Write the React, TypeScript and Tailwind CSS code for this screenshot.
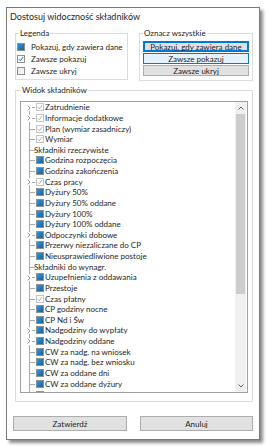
import React from "react";

type Kind = "gray" | "blue" | "none";
type Row = { t: string; k: Kind; exp?: boolean };

const rows: Row[] = [
  { t: "Zatrudnienie", k: "gray", exp: true },
  { t: "Informacje dodatkowe", k: "gray", exp: true },
  { t: "Plan (wymiar zasadniczy)", k: "gray" },
  { t: "Wymiar", k: "gray" },
  { t: "Składniki rzeczywiste", k: "none" },
  { t: "Godzina rozpoczęcia", k: "blue" },
  { t: "Godzina zakończenia", k: "blue" },
  { t: "Czas pracy", k: "gray", exp: true },
  { t: "Dyżury 50%", k: "blue" },
  { t: "Dyżury 50% oddane", k: "blue" },
  { t: "Dyżury 100%", k: "blue" },
  { t: "Dyżury 100% oddane", k: "blue" },
  { t: "Odpoczynki dobowe", k: "blue", exp: true },
  { t: "Przerwy niezaliczane do CP", k: "blue" },
  { t: "Nieusprawiedliwione postoje", k: "blue" },
  { t: "Składniki do wynagr.", k: "none" },
  { t: "Uzupełnienia z oddawania", k: "blue", exp: true },
  { t: "Przestoje", k: "blue" },
  { t: "Czas płatny", k: "gray" },
  { t: "CP godziny nocne", k: "blue" },
  { t: "CP Nd i Św", k: "blue" },
  { t: "Nadgodziny do wypłaty", k: "blue", exp: true },
  { t: "Nadgodziny oddane", k: "blue", exp: true },
  { t: "CW za nadg. na wniosek", k: "blue" },
  { t: "CW za nadg. bez wniosku", k: "blue" },
  { t: "CW za oddane dni", k: "blue" },
  { t: "CW za oddane dyżury", k: "blue" },
];

function BlueBox() {
  return (
    <span className="w-[8px] h-[8px] border border-[#8e8f8f] bg-white flex items-center justify-center shrink-0">
      <span className="w-[6px] h-[6px] bg-gradient-to-br from-[#2f9be0] to-[#1a5fa0]" />
    </span>
  );
}

function CheckBox({ gray }: { gray?: boolean }) {
  return (
    <span
      className={
        "w-[8px] h-[8px] border bg-white flex items-center justify-center shrink-0 " +
        (gray ? "border-[#c4c4c4]" : "border-[#8e8f8f]")
      }
    >
      <svg width="6" height="6" viewBox="0 0 6 6">
        <path d="M0.8 3.2 L2.3 4.7 L5.2 1.0" fill="none" stroke={gray ? "#b0b0b0" : "#3c5a8a"} strokeWidth="1" />
      </svg>
    </span>
  );
}

function EmptyBox() {
  return <span className="w-[8px] h-[8px] border border-[#8e8f8f] bg-gradient-to-br from-[#e6e6e6] to-[#fbfbfb] shrink-0" />;
}

function TreeRow({ r, first }: { r: Row; first: boolean }) {
  return (
    <div className="h-[10.64px] flex items-center">
      <div className="w-[10px] self-stretch relative shrink-0">
        <span className={"absolute left-[3px] w-px bg-[#a8a8a8] bottom-0 " + (first ? "top-1/2" : "top-0")} />
        <span className="absolute left-[3px] top-1/2 w-[6px] h-px bg-[#a8a8a8]" />
        {r.exp && (
          <span className="absolute left-[0px] top-[2px] w-[6px] h-[7px] bg-white flex items-center justify-center">
            <svg width="4" height="6" viewBox="0 0 4 6">
              <path d="M0.6 0.6 L3 3 L0.6 5.4" fill="none" stroke="#8a8a8a" strokeWidth="0.9" />
            </svg>
          </span>
        )}
      </div>
      {r.k === "blue" && <BlueBox />}
      {r.k === "gray" && <CheckBox gray />}
      <span className={"text-[8px] leading-[10px] text-[#1e1e1e] whitespace-nowrap " + (r.k === "none" ? "ml-[-2px]" : "ml-[1px]")}>
        {r.t}
      </span>
    </div>
  );
}

function WinButton({ children, variant }: { children: React.ReactNode; variant: "focus" | "hover" | "normal" }) {
  const cls =
    variant === "focus"
      ? "border-[#0078d7] bg-[#e1e1e1] shadow-[inset_0_0_0_1px_#0078d7]"
      : variant === "hover"
      ? "border-[#0078d7] bg-[#e5f1fb]"
      : "border-[#adadad] bg-[#e1e1e1]";
  return (
    <div className={"h-[11px] border flex items-center justify-center text-[8px] leading-none text-[#1e1e1e] " + cls}>
      {children}
    </div>
  );
}

export default function App() {
  return (
    <div
      className="w-[267px] h-[446px] bg-white pl-[6px] pt-[7px]"
      style={{ fontFamily: 'Lato, "Liberation Sans", Arial, sans-serif' }}
    >
      <div className="w-[254px] h-[433px] border border-[#7a7a7a] bg-white shadow-[3px_3px_3px_rgba(0,0,0,0.45)] flex flex-col">
        <div className="h-[17px] pl-[3px] flex items-center text-[9px] text-[#1e1e1e]">Dostosuj widoczność składników</div>
        <div className="flex pl-[8px] pr-[5px] gap-[11px] mt-[3px]">
          <fieldset className="w-[113px] h-[52px] border border-[#dcdcdc] pl-[1px]">
            <legend className="text-[8px] leading-[10px] ml-[2px] px-[1px] text-[#1e1e1e]">Legenda</legend>
            <div className="flex flex-col gap-[3px] mt-[4px]">
              <div className="flex items-center gap-[6px] h-[9px]">
                <BlueBox />
                <span className="text-[8px] text-[#1e1e1e]">Pokazuj, gdy zawiera dane</span>
              </div>
              <div className="flex items-center gap-[6px] h-[9px]">
                <CheckBox />
                <span className="text-[8px] text-[#1e1e1e]">Zawsze pokazuj</span>
              </div>
              <div className="flex items-center gap-[6px] h-[9px]">
                <EmptyBox />
                <span className="text-[8px] text-[#1e1e1e]">Zawsze ukryj</span>
              </div>
            </div>
          </fieldset>
          <fieldset className="w-[114px] h-[53px] border border-[#dcdcdc] px-[3px]">
            <legend className="text-[8px] leading-[10px] ml-[0px] px-[1px] text-[#1e1e1e]">Oznacz wszystkie</legend>
            <div className="flex flex-col gap-px mt-[3px]">
              <WinButton variant="focus">Pokazuj, gdy zawiera dane</WinButton>
              <WinButton variant="hover">Zawsze pokazuj</WinButton>
              <WinButton variant="normal">Zawsze ukryj</WinButton>
            </div>
          </fieldset>
        </div>
        <fieldset className="ml-[8px] mr-[6px] mt-[4px] h-[317px] border border-[#dcdcdc] px-[4px]">
          <legend className="text-[8px] leading-[10px] ml-[1px] px-[1px] text-[#1e1e1e]">Widok składników</legend>
          <div className="mt-[6px] h-[292px] border border-[#a0a0a0] flex overflow-hidden">
            <div className="flex-1 pl-[5px] overflow-hidden">
              {rows.map((r, i) => (
                <TreeRow key={i} r={r} first={i === 0} />
              ))}
              <div className="h-[4px] flex">
                <div className="w-[10px] relative shrink-0">
                  <span className="absolute left-[3px] w-px bg-[#a8a8a8] top-0 bottom-0" />
                </div>
                <span className="w-[8px] h-[4px] border-x border-t border-[#8e8f8f] mt-[2px]" />
              </div>
            </div>
            <div className="w-[11px] bg-[#f0f0f0] flex flex-col mr-[1px]">
              <div className="h-[12px] flex items-center justify-center">
                <svg width="6" height="4" viewBox="0 0 6 4">
                  <path d="M0.5 3.5 L3 1 L5.5 3.5" fill="none" stroke="#606060" strokeWidth="1" />
                </svg>
              </div>
              <div className="h-[180px] mx-[1px] bg-[#cdcdcd]" />
              <div className="flex-1" />
              <div className="h-[12px] flex items-center justify-center">
                <svg width="6" height="4" viewBox="0 0 6 4">
                  <path d="M0.5 0.5 L3 3 L5.5 0.5" fill="none" stroke="#606060" strokeWidth="1" />
                </svg>
              </div>
            </div>
          </div>
        </fieldset>
        <div className="flex pl-[6px] pr-[5px] gap-[13px] mt-[14px]">
          <div className="w-[114px] h-[15px] border border-[#adadad] bg-[#e1e1e1] flex items-center justify-center text-[8px] text-[#1e1e1e]">Zatwierdź</div>
          <div className="w-[113px] h-[15px] border border-[#adadad] bg-[#e1e1e1] flex items-center justify-center text-[8px] text-[#1e1e1e]">Anuluj</div>
        </div>
      </div>
    </div>
  );
}
